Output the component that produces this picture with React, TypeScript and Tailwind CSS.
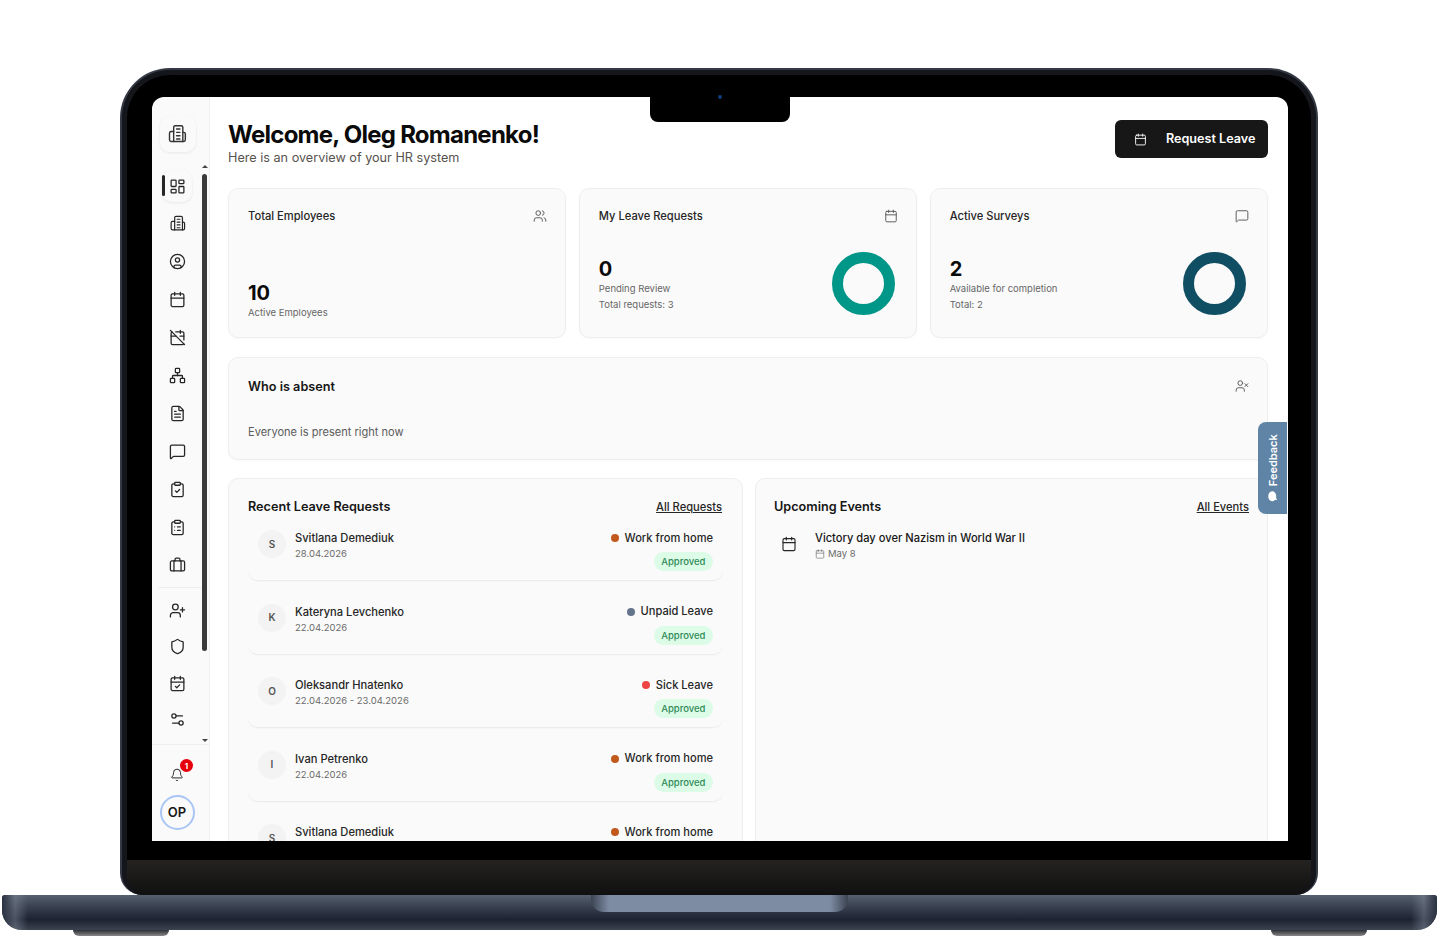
import {
  Bell,
  Calendar,
  CalendarCheck,
  CalendarOff,
  CircleUser,
  ClipboardCheck,
  ClipboardList,
  FileText,
  LayoutDashboard,
  MessageSquare,
  Network,
  Settings2,
  Shield,
  UserPlus,
  UserX,
  Users,
} from "lucide-react";

const font = { fontFamily: "Inter, 'Liberation Sans', sans-serif" };

const BuildingIcon = ({ size = 16 }: { size?: number }) => (
  <svg width={size} height={size} viewBox="0 0 24 24" fill="none" stroke="currentColor" strokeWidth="1.7" strokeLinecap="round" strokeLinejoin="round">
    <path d="M8 21V4a2 2 0 0 1 2-2h7a2 2 0 0 1 2 2v17" />
    <path d="M8 9H5a2 2 0 0 0-2 2v8a2 2 0 0 0 2 2h15a2 2 0 0 0 2-2v-7a2 2 0 0 0-2-2h-1" />
    <path d="M11.5 6h4M11.5 10h4M11.5 14h4M11.5 18h4" />
  </svg>
);

const CaseIcon = ({ size = 16 }: { size?: number }) => (
  <svg width={size} height={size} viewBox="0 0 24 24" fill="none" stroke="currentColor" strokeWidth="1.8" strokeLinecap="round" strokeLinejoin="round">
    <rect x="2" y="7" width="20" height="14" rx="2" />
    <path d="M7 7v14M17 7v14M8.5 7V5a2 2 0 0 1 2-2h3a2 2 0 0 1 2 2v2" />
  </svg>
);

const Bubble = () => (
  <svg width="12" height="12" viewBox="0 0 24 24" fill="currentColor">
    <path d="M12 3c5.500 0 10 3.600 10 8s-4.500 8-10 8c-1 0-2-.1-3-.4L4 21l1-4.200C3.200 15.300 2 13.300 2 11c0-4.400 4.500-8 10-8z" />
  </svg>
);

const navTop = [
  LayoutDashboard,
  BuildingIcon,
  CircleUser,
  Calendar,
  CalendarOff,
  Network,
  FileText,
  MessageSquare,
  ClipboardCheck,
  ClipboardList,
  CaseIcon,
];
const navBottom = [UserPlus, Shield, CalendarCheck, Settings2];

const requests = [
  { initial: "S", name: "Svitlana Demediuk", date: "28.04.2026", type: "Work from home", dot: "bg-[#c2591c]" },
  { initial: "K", name: "Kateryna Levchenko", date: "22.04.2026", type: "Unpaid Leave", dot: "bg-[#64748b]" },
  { initial: "O", name: "Oleksandr Hnatenko", date: "22.04.2026 - 23.04.2026", type: "Sick Leave", dot: "bg-[#ef4444]" },
  { initial: "I", name: "Ivan Petrenko", date: "22.04.2026", type: "Work from home", dot: "bg-[#c2591c]" },
  { initial: "S", name: "Svitlana Demediuk", date: "20.04.2026", type: "Work from home", dot: "bg-[#c2591c]" },
];

const Sidebar = () => (
  <aside className="w-[58px] shrink-0 flex flex-col bg-[#fafafa] border-r border-[#f1f1f1]">
    <div className="h-[71px] pt-[19px] pl-[8px] shrink-0">
      <div className="w-[36px] h-[36px] pr-[2px] rounded-[10px] bg-[#fafafa] shadow-[0_1px_3px_rgba(0,0,0,0.08)] flex items-center justify-center text-[#333]">
        <BuildingIcon size={20} />
      </div>
    </div>
    <div className="flex h-[577px] shrink-0 border-b border-[#eeeeee]">
      <nav className="w-[50px] flex flex-col items-center pt-[2px] text-[#262626]">
        {navTop.map((Icon, i) => (
          <div
            key={i}
            className={
              i === 0
                ? "relative w-[30px] h-[32px] mb-[6px] rounded-[10px] shadow-[0_1px_3px_rgba(0,0,0,0.08)] flex items-center justify-center"
                : "h-[37.900px] w-[30px] shrink-0 flex items-center justify-center -mt-[3px] mb-[3px]"
            }
          >
            {i === 0 && <span className="absolute left-0 top-[5px] w-[3px] h-[21px] rounded-full bg-[#262626]" />}
            <Icon size={17} strokeWidth={1.8} />
          </div>
        ))}
        <div className="w-[44px] h-px bg-[#eeeeee] mb-[4px] ml-[6px]" />
        {navBottom.map((Icon, i) => (
          <div key={i} className="h-[36.500px] w-[30px] shrink-0 flex items-center justify-center">
            <Icon size={17} strokeWidth={1.8} />
          </div>
        ))}
      </nav>
      <div className="w-[9px] -ml-[2px] flex flex-col items-center justify-between pb-[1px]">
        <span className="w-0 h-0 mt-[-3px] border-x-[3px] border-x-transparent border-b-[3px] border-b-[#444]" />
        <span className="w-[5px] h-[477px] mb-[87px] mt-[4px] rounded-full bg-[#3a3a3a]" />
        <span className="w-0 h-0 mb-[1px] border-x-[3px] border-x-transparent border-t-[3px] border-t-[#444]" />
      </div>
    </div>
    <div className="flex-1 flex flex-col items-center pr-[7px] pt-[21px] text-[#262626]">
      <div className="relative h-[18px] flex items-center">
        <Bell size={14} strokeWidth={1.7} />
        <span className="absolute -top-[7px] left-[10px] w-[13px] h-[13px] rounded-full bg-[#e7000b] text-white text-[8px] font-bold flex items-center justify-center">
          1
        </span>
      </div>
      <div className="mt-[11px] w-[35px] h-[35px] rounded-full border-2 border-[#a9c6f5] flex items-center justify-center text-[13px] font-semibold text-[#171717]">
        OP
      </div>
    </div>
  </aside>
);

const StatCard = ({
  title,
  icon,
  value,
  lines,
  ring,
}: {
  title: string;
  icon: React.ReactNode;
  value: string;
  lines: string[];
  ring?: string;
}) => (
  <div className="relative h-[150px] rounded-[10px] border border-[#eeeeee] bg-[#fafafa] px-[19px] pt-[18px] shadow-[0_1px_2px_rgba(0,0,0,0.03)]">
    <div className="flex items-center justify-between">
      <span className="text-[11.150px] leading-[18px] font-medium text-[#262626]">{title}</span>
      <span className="text-[#555] -mr-[1px] -mt-[1px]">{icon}</span>
    </div>
    <div className={lines.length > 1 ? "mt-[27px] flex items-start justify-between" : "mt-[57px]"}>
      <div className={lines.length > 1 ? "mt-[6px]" : ""}>
        <div className="text-[20px] leading-[23px] font-bold text-[#0a0a0a]">{value}</div>
        {lines.map((l) => (
          <div key={l} className="text-[9.500px] leading-[16px] text-[#666]">
            {l}
          </div>
        ))}
      </div>
      {ring && <div className={`mr-[2px] w-[63px] h-[63px] rounded-full border-[11px] ${ring}`} />}
    </div>
  </div>
);

const RequestRow = ({ r }: { r: (typeof requests)[number] }) => (
  <div className="h-[54px] mb-[19.500px] shrink-0 flex justify-between px-[10px] rounded-b-[10px] border-b border-[#ececec] shadow-[0_1px_1px_rgba(0,0,0,0.02)]">
    <div className="flex gap-[9px]">
      <div className="w-[28px] h-[28px] mt-[3px] rounded-full bg-[#f3f3f3] flex items-center justify-center text-[10px] font-semibold text-[#555]">
        {r.initial}
      </div>
      <div>
        <div className="text-[11.150px] leading-[16px] mt-[3px] font-medium text-[#262626]">{r.name}</div>
        <div className="text-[9.500px] leading-[15px] text-[#6b6b6b]">{r.date}</div>
      </div>
    </div>
    <div className="flex flex-col items-end">
      <div className="flex items-center gap-[6px] mt-[3px] h-[16px]">
        <span className={`w-[8px] h-[8px] rounded-full ${r.dot}`} />
        <span className="text-[11.100px] font-medium text-[#262626]">{r.type}</span>
      </div>
      <span className="mt-[6px] h-[19px] px-[7.500px] rounded-full bg-[#dcfce7] text-[#2f8a57] text-[9.500px] leading-[19px] font-medium">
        Approved
      </span>
    </div>
  </div>
);

const Main = () => (
  <main className="flex-1 min-w-0 bg-white pl-[18px] pr-[20px] pt-[23px] overflow-hidden">
    <header className="flex justify-between h-[68px]">
      <div>
        <h1 className="text-[24px] leading-[30px] font-bold tracking-[-0.75px] text-[#0a0a0a]">Welcome, Oleg Romanenko!</h1>
        <p className="text-[12.650px] leading-[16px] text-[#57534e]">Here is an overview of your HR system</p>
      </div>
      <button className="w-[153px] h-[38px] rounded-[6px] bg-[#171717] text-white flex items-center pl-[19px] gap-[19px]">
        <Calendar size={13} strokeWidth={1.7} />
        <span className="text-[12.600px] font-semibold">Request Leave</span>
      </button>
    </header>

    <section className="grid grid-cols-3 gap-[12.500px]">
      <StatCard title="Total Employees" icon={<Users size={14} strokeWidth={1.6} />} value="10" lines={["Active Employees"]} />
      <StatCard
        title="My Leave Requests"
        icon={<Calendar size={14} strokeWidth={1.6} />}
        value="0"
        lines={["Pending Review", "Total requests: 3"]}
        ring="border-[#009688]"
      />
      <StatCard
        title="Active Surveys"
        icon={<MessageSquare size={14} strokeWidth={1.6} />}
        value="2"
        lines={["Available for completion", "Total: 2"]}
        ring="border-[#104e64]"
      />
    </section>

    <section className="mt-[19px] h-[103px] rounded-[10px] border border-[#eeeeee] bg-[#fafafa] px-[19px] pt-[20px] shadow-[0_1px_2px_rgba(0,0,0,0.03)]">
      <div className="flex items-center justify-between">
        <span className="text-[12.700px] leading-[17px] font-semibold text-[#171717]">Who is absent</span>
        <UserX size={14} strokeWidth={1.6} className="text-[#555] -mr-[1px] -mt-[1px]" />
      </div>
      <p className="mt-[29px] text-[11.050px] leading-[16px] text-[#5c5c5c]">Everyone is present right now</p>
    </section>

    <section className="mt-[18px] grid grid-cols-[515px_1fr] gap-[12px] h-[420px]">
      <div className="rounded-[10px] border border-[#eeeeee] bg-[#fafafa] px-[19px] pt-[19px] overflow-hidden">
        <div className="flex justify-between items-center h-[18px] mb-[11px]">
          <span className="text-[12.650px] font-semibold text-[#171717]">Recent Leave Requests</span>
          <a className="mr-[1px] text-[11.150px] font-medium underline text-[#262626]">All Requests</a>
        </div>
        <div className="flex flex-col">
          {requests.map((r, i) => (
            <RequestRow key={i} r={r} />
          ))}
        </div>
      </div>
      <div className="rounded-[10px] border border-[#eeeeee] bg-[#fafafa] pl-[18px] pr-[18px] pt-[19px]">
        <div className="flex justify-between items-center h-[18px] mb-[11px]">
          <span className="text-[12.650px] font-semibold text-[#171717]">Upcoming Events</span>
          <a className="text-[11.150px] font-medium underline text-[#262626]">All Events</a>
        </div>
        <div className="flex gap-[18px] pl-[7px]">
          <Calendar size={16} strokeWidth={1.7} className="mt-[9px] text-[#262626]" />
          <div>
            <div className="text-[11.130px] leading-[16px] mt-[3px] font-medium text-[#171717]">Victory day over Nazism in World War II</div>
            <div className="flex items-center gap-[3px] text-[9.500px] leading-[15px] text-[#6b6b6b]">
              <Calendar size={10} strokeWidth={1.5} />
              May 8
            </div>
          </div>
        </div>
      </div>
    </section>
  </main>
);

export default function App() {
  return (
    <div style={font} className="w-[1440px] h-[939px] bg-white overflow-hidden flex flex-col items-center pt-[68px] antialiased">
      {/* lid */}
      <div className="relative w-[1198px] h-[827px] shrink-0 ml-[-2px] rounded-t-[50px] rounded-b-[22px] bg-black border-x-2 border-t-2 border-[#343944] shadow-[inset_0_0_0_5px_#14161b] flex flex-col overflow-hidden">
        <div className="h-[27px] shrink-0" />
        <div className="ml-[30px] w-[1136px] h-[744px] shrink-0 flex rounded-t-[12px] overflow-hidden">
          <Sidebar />
          <Main />
        </div>
        <div className="h-[19px] shrink-0" />
        <div className="flex-1 mx-[5px] rounded-b-[18px] bg-gradient-to-b from-[#242321] to-[#101010]" />
        {/* notch */}
        <div className="absolute left-[528px] top-[27px] w-[140px] h-[25px] rounded-b-[8px] bg-black flex justify-center">
          <span className="absolute -top-[2px] w-[4px] h-[4px] rounded-full bg-[#0d3a7a]" />
        </div>
      </div>

      {/* base */}
      <div className="relative w-[1435px] h-[35px] shrink-0 -ml-[1px] rounded-t-[3px] rounded-b-[20px] bg-gradient-to-b from-[#56606e] via-[#1d2231] via-[70%] to-[#3c4350] overflow-hidden">
        <div className="absolute left-0 top-0 w-[26px] h-full bg-gradient-to-r from-[#2a3140] via-[#7b8595]/50 to-transparent" />
        <div className="absolute right-0 top-0 w-[26px] h-full bg-gradient-to-l from-[#2a3140] via-[#7b8595]/50 to-transparent" />
        <div className="absolute left-[589px] top-0 w-[257px] h-[17px] rounded-b-[13px] bg-[linear-gradient(90deg,#3c4452,#7d8ba3_7%,#7d8ba3_93%,#3c4452)]" />
      </div>
      <div className="w-[1294px] h-[6px] shrink-0 -ml-[1px] flex justify-between">
        <div className="w-[96px] h-[6px] rounded-b-[6px] bg-gradient-to-b from-[#2e3238] to-[#888]" />
        <div className="w-[96px] h-[6px] rounded-b-[6px] bg-gradient-to-b from-[#2e3238] to-[#888]" />
      </div>

      {/* feedback tab */}
      <div className="absolute left-[1258px] top-[422px] w-[29px] h-[92px] rounded-l-[8px] bg-[#5f84a6] text-white flex items-center justify-center">
        <div className="-rotate-90 flex items-center gap-[4px] whitespace-nowrap text-[11px] font-semibold">
          <Bubble />
          Feedback
        </div>
      </div>
    </div>
  );
}
